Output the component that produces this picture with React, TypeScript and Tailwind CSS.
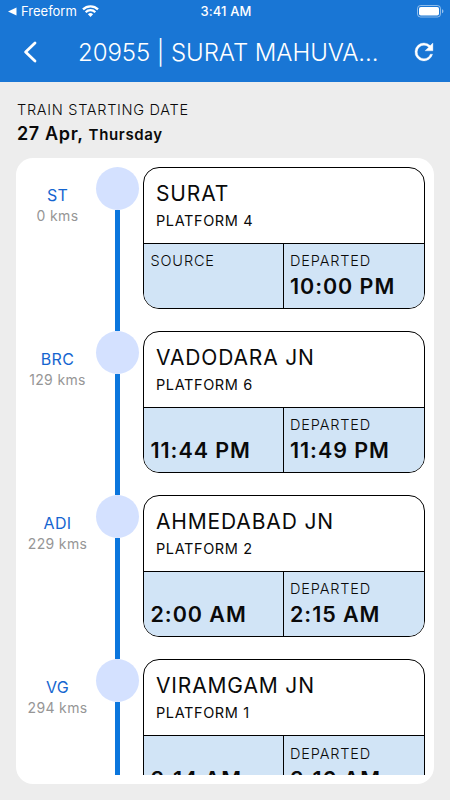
import React from 'react';

interface Stop {
  code: string;
  distance: string;
  name: string;
  platform: string;
  arrivalLabel?: string;
  arrival?: string;
  departure: string;
}

const stops: Stop[] = [
  { code: 'ST', distance: '0 kms', name: 'SURAT', platform: 'PLATFORM 4', arrivalLabel: 'SOURCE', departure: '10:00 PM' },
  { code: 'BRC', distance: '129 kms', name: 'VADODARA JN', platform: 'PLATFORM 6', arrival: '11:44 PM', departure: '11:49 PM' },
  { code: 'ADI', distance: '229 kms', name: 'AHMEDABAD JN', platform: 'PLATFORM 2', arrival: '2:00 AM', departure: '2:15 AM' },
  { code: 'VG', distance: '294 kms', name: 'VIRAMGAM JN', platform: 'PLATFORM 1', arrival: '3:14 AM', departure: '3:16 AM' },
];

const StatusBar: React.FC = () => (
  <div className="grid h-[22px] grid-cols-3 items-center pl-2 pr-[6px]">
    <div className="flex items-center">
      <svg className="h-[9px] w-[9px]" viewBox="0 0 9 9" fill="currentColor">
        <path d="M0 4.5 8.5.5v8z" />
      </svg>
      <span className="ml-1 text-[13px] leading-[22px]">Freeform</span>
      <svg className="ml-[5px] h-3 w-[17px] shrink-0" viewBox="0 0 17 12" fill="none" stroke="currentColor" strokeWidth="2.3">
        <path d="M1 4.4a10.7 10.7 0 0 1 15 0" />
        <path d="M3.7 7.2a6.8 6.8 0 0 1 9.6 0" />
        <path d="M8.5 12 5.9 9.3a3.8 3.8 0 0 1 5.2 0z" fill="currentColor" stroke="none" />
      </svg>
    </div>
    <span className="text-center text-[13px] font-medium leading-[22px] tracking-[0.1px]">3:41 AM</span>
    <svg className="h-[13px] w-[27px] justify-self-end" viewBox="0 0 27 13" fill="none">
      <rect x="0.5" y="0.5" width="23" height="11.5" rx="3" stroke="currentColor" strokeOpacity="0.5" />
      <rect x="2" y="2" width="20" height="8.5" rx="1.8" fill="currentColor" />
      <path d="M25 4.2v4c.9-.3 1.4-1.1 1.4-2s-.5-1.7-1.4-2z" fill="currentColor" fillOpacity="0.55" />
    </svg>
  </div>
);

const Header: React.FC = () => (
  <header className="h-[82px] shrink-0 bg-[#1976d5] text-white">
    <StatusBar />
    <div className="flex h-[60px] items-center pl-[23px] pr-[14px]">
      <svg className="h-[22px] w-[14px]" viewBox="0 0 14 22" fill="none" stroke="currentColor" strokeWidth="2.8" strokeLinecap="round" strokeLinejoin="round">
        <path d="M12 2 2.6 11 12 20" />
      </svg>
      <h1 className="ml-[41px] flex-1 whitespace-nowrap pt-[2px] text-[24px] font-light leading-[60px] tracking-[-0.06px]">20955 | SURAT MAHUVA...</h1>
      <svg className="h-6 w-6" viewBox="0 0 24 24" fill="currentColor">
        <path
          d="M17.65 6.35A7.958 7.958 0 0 0 12 4a8 8 0 1 0 7.73 10h-2.08A5.99 5.99 0 0 1 12 18a6 6 0 1 1 0-12c1.66 0 3.14.69 4.22 1.78L13 11h7V4z"
          transform="translate(-1.5 -1.5) scale(1.12)"
          stroke="currentColor"
          strokeWidth="0.3"
        />
      </svg>
    </div>
  </header>
);

const StopRow: React.FC<{ stop: Stop }> = ({ stop }) => (
  <div className="flex h-[164.15px] shrink-0">
    <div className="w-[83px] shrink-0 pt-[17px] text-center tracking-[0.3px]">
      <div className="text-base leading-[22px] text-[#1565d0]">{stop.code}</div>
      <div className="text-sm leading-5 tracking-[0.35px] text-[#969696]">{stop.distance}</div>
    </div>
    <div className="-ml-[3px] flex w-[43px] shrink-0 flex-col items-center">
      <div className="size-[43.5px] shrink-0 rounded-full bg-[#d4e1ff]" />
      <div className="w-[4.5px] flex-1 bg-[#0b76dd]" />
    </div>
    <div className="ml-1 flex h-[142.2px] w-[282px] shrink-0 flex-col overflow-hidden rounded-2xl border border-black bg-white">
      <div className="h-[75.3px] pl-[12px] pt-[12px]">
        <div className="text-[21px] leading-7 tracking-[0.85px]">{stop.name}</div>
        <div className="text-[14.5px] leading-[26px] tracking-[0.6px]">{stop.platform}</div>
      </div>
      <div className="flex flex-1 border-t border-black bg-[#d1e4f6]">
        <div className="w-[139px] pl-[6.5px] pt-[6.3px]">
          <div className="h-[22px] text-[14.5px] font-light leading-[22px] tracking-[0.85px]">{stop.arrivalLabel}</div>
          <div className="text-[21.5px] font-semibold leading-[28px] tracking-[0.95px]">{stop.arrival}</div>
        </div>
        <div className="flex-1 border-l border-black pl-[6px] pt-[6.3px]">
          <div className="h-[22px] text-[14.5px] font-light leading-[22px] tracking-[0.85px]">DEPARTED</div>
          <div className="text-[21.5px] font-semibold leading-[28px] tracking-[0.95px]">{stop.departure}</div>
        </div>
      </div>
    </div>
  </div>
);

export default function App() {
  return (
    <div className="flex h-[800px] w-[450px] flex-col overflow-hidden bg-[#ededed] font-['Inter',sans-serif] text-[#0a0a0a]">
      <Header />
      <main className="flex min-h-0 flex-1 flex-col px-4 pb-[16.5px] pt-[17px]">
        <div className="pl-[1px] text-[14.5px] font-light leading-[22px] tracking-[0.7px]">TRAIN STARTING DATE</div>
        <div className="h-[26px] pl-[1px] text-lg font-semibold leading-[26px] tracking-[0.65px]">
          27 Apr, <span className="text-[15px]">Thursday</span>
        </div>
        <section className="mt-[10.5px] min-h-0 flex-1 rounded-[17px] bg-white pb-[8.5px] pt-[9px]">
          <div className="flex h-full flex-col overflow-hidden">
            {stops.map((stop) => (
              <StopRow key={stop.code} stop={stop} />
            ))}
          </div>
        </section>
      </main>
    </div>
  );
}
